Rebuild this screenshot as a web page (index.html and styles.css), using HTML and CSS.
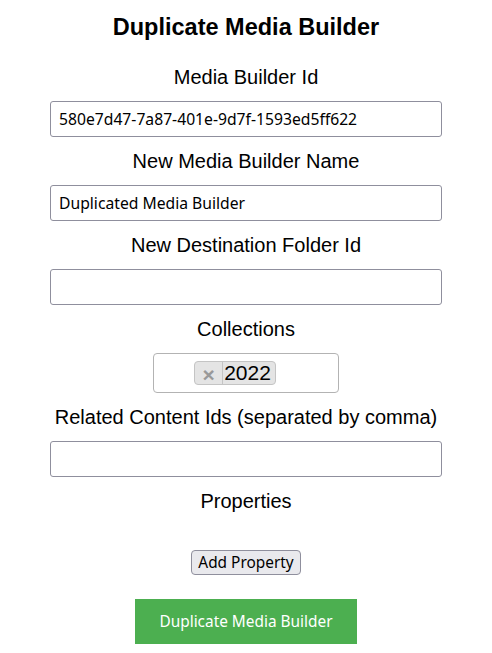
FILE: index.html
```html
<!DOCTYPE html>
<html>
<head>
<meta charset="utf-8">
<link rel="stylesheet" href="styles.css">
</head>
<body>
<div class="page">
  <h2 class="title">Duplicate Media Builder</h2>
  <label class="label">Media Builder Id</label>
  <input class="field" type="text" value="580e7d47-7a87-401e-9d7f-1593ed5ff622">
  <label class="label">New Media Builder Name</label>
  <input class="field" type="text" value="Duplicated Media Builder">
  <label class="label">New Destination Folder Id</label>
  <input class="field" type="text" value="">
  <label class="label">Collections</label>
  <div class="multi">
    <span class="chip"><span class="chip-x">×</span><span class="chip-text">2022</span></span>
    <span class="multi-input"></span>
  </div>
  <label class="label">Related Content Ids (separated by comma)</label>
  <input class="field" type="text" value="">
  <label class="label">Properties</label>
  <div class="props"></div>
  <button class="add-btn" type="button">Add Property</button>
  <button class="submit" type="button">Duplicate Media Builder</button>
</div>
</body>
</html>
```

FILE: styles.css
```css
html, body {
  margin: 0;
  padding: 0;
  background: #ffffff;
}
.page {
  display: flex;
  flex-direction: column;
  align-items: center;
  font-family: "Liberation Sans", Arial, sans-serif;
  color: #000;
  padding-top: 14px;
}
.title {
  margin: 0 0 26px 0;
  font-size: 23.5px;
  line-height: 26px;
  font-weight: bold;
}
.label {
  display: block;
  font-size: 20px;
  line-height: 23px;
  margin-bottom: 12px;
}
.field {
  box-sizing: border-box;
  width: 392px;
  height: 36px;
  margin: 0 0 13px 0;
  padding: 0 8px;
  border: 1px solid #8f8f9d;
  border-radius: 3px;
  font-family: "Noto Sans", Tahoma, sans-serif;
  font-size: 15.7px;
  color: #000;
  background: #fff;
}
.multi {
  box-sizing: border-box;
  width: 186px;
  height: 40px;
  border: 1px solid #b3b3b3;
  border-radius: 4px;
  margin-bottom: 13px;
  display: flex;
  align-items: center;
  justify-content: center;
}
.multi-input {
  width: 22px;
}
.chip {
  display: flex;
  align-items: stretch;
  height: 24px;
  box-sizing: border-box;
  border: 1px solid #c4c4c4;
  border-radius: 4px;
  background: #e4e4e4;
  overflow: hidden;
}
.chip-x {
  display: flex;
  align-items: center;
  justify-content: center;
  width: 28px;
  border-right: 1px solid #c4c4c4;
  color: #999;
  font-size: 21px;
  font-weight: bold;
  line-height: 1;
  padding-top: 2px;
  box-sizing: border-box;
}
.chip-text {
  display: flex;
  align-items: center;
  padding: 0 4px 0 1px;
  font-size: 21px;
}
.props {
  height: 25px;
}
.add-btn {
  box-sizing: border-box;
  height: 25px;
  padding: 0 6px;
  font-family: "Noto Sans", Tahoma, sans-serif;
  font-size: 15.4px;
  color: #000;
  background: #e9e9ed;
  border: 1px solid #8f8f9d;
  border-radius: 4px;
  margin-bottom: 24px;
}
.submit {
  box-sizing: border-box;
  width: 222px;
  height: 45px;
  border: none;
  background: #4caf50;
  color: #fff;
  font-family: "Noto Sans", Tahoma, sans-serif;
  font-size: 15.4px;
}
```
